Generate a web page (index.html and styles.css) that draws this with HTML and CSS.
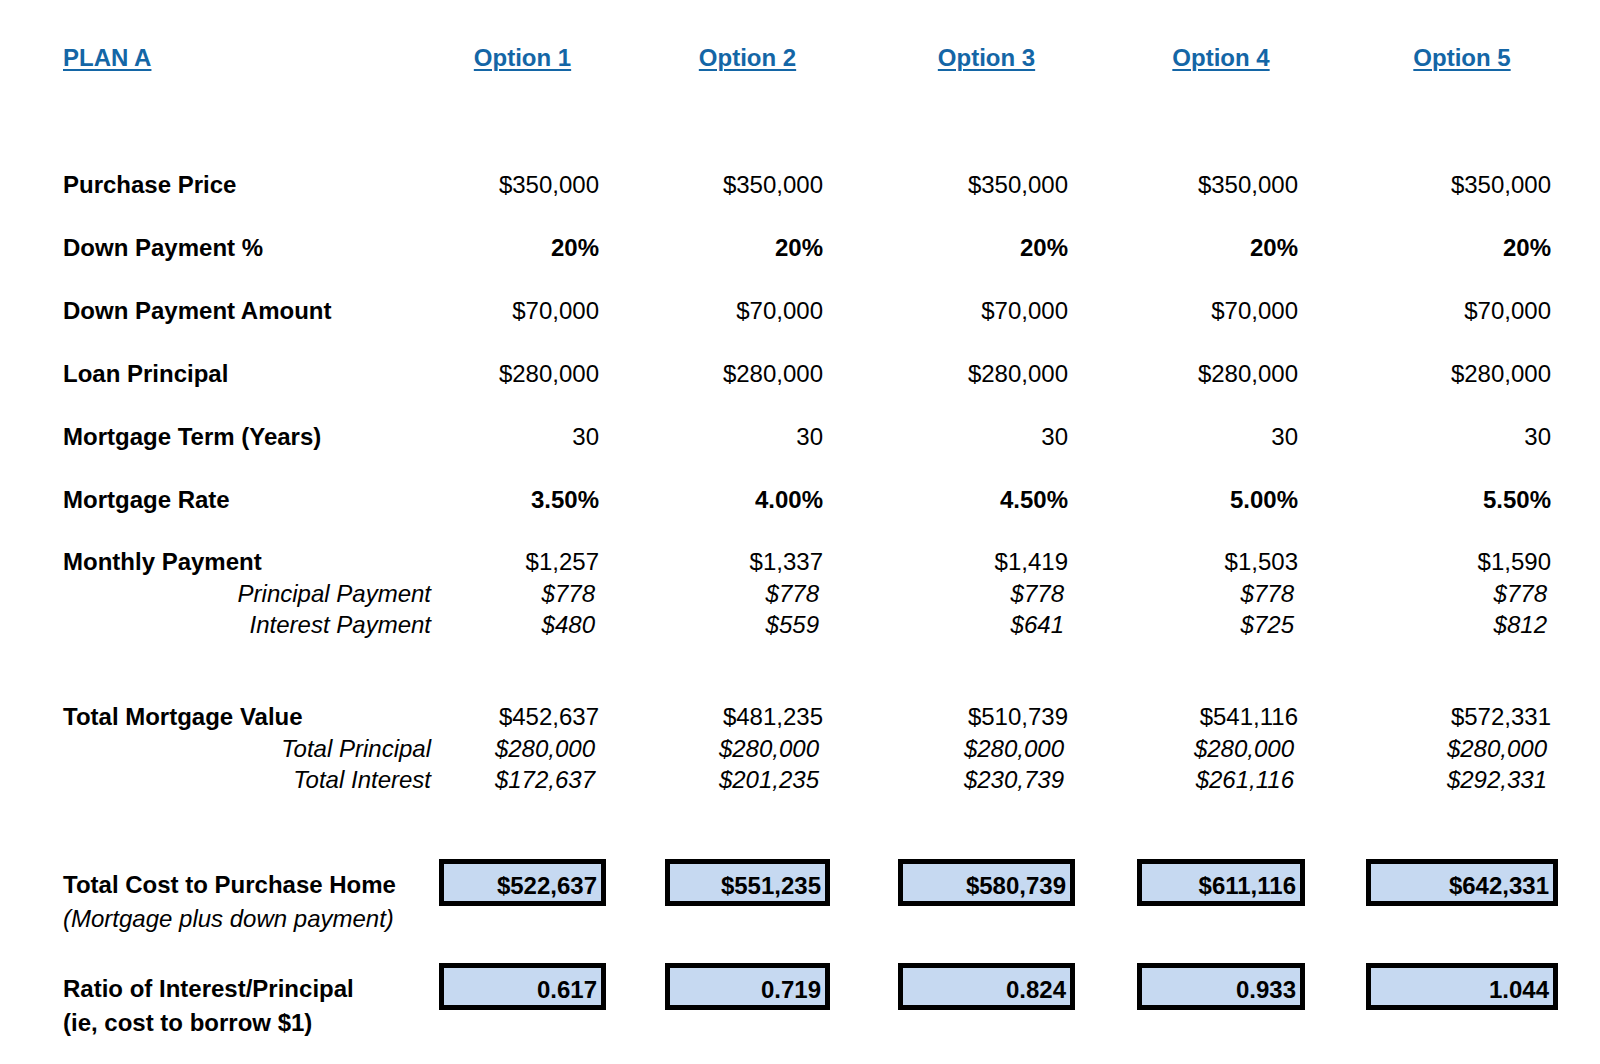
FILE: index.html
```html
<!DOCTYPE html>
<html lang="en">
<head>
<meta charset="utf-8">
<title>Plan A – Mortgage Options</title>
<link rel="stylesheet" href="styles.css">
</head>
<body>
<div class="sheet">
  <div class="row hdr">
    <div class="lab"><span class="link">PLAN A</span></div>
    <div class="cell"><span class="link">Option 1</span></div>
    <div class="cell"><span class="link">Option 2</span></div>
    <div class="cell"><span class="link">Option 3</span></div>
    <div class="cell"><span class="link">Option 4</span></div>
    <div class="cell"><span class="link">Option 5</span></div>
  </div>

  <div class="block main">
    <div class="row tall">
      <div class="lab b">Purchase Price</div>
      <div class="cell">$350,000</div><div class="cell">$350,000</div><div class="cell">$350,000</div><div class="cell">$350,000</div><div class="cell">$350,000</div>
    </div>
    <div class="row tall">
      <div class="lab b">Down Payment %</div>
      <div class="cell b">20%</div><div class="cell b">20%</div><div class="cell b">20%</div><div class="cell b">20%</div><div class="cell b">20%</div>
    </div>
    <div class="row tall">
      <div class="lab b">Down Payment Amount</div>
      <div class="cell">$70,000</div><div class="cell">$70,000</div><div class="cell">$70,000</div><div class="cell">$70,000</div><div class="cell">$70,000</div>
    </div>
    <div class="row tall">
      <div class="lab b">Loan Principal</div>
      <div class="cell">$280,000</div><div class="cell">$280,000</div><div class="cell">$280,000</div><div class="cell">$280,000</div><div class="cell">$280,000</div>
    </div>
    <div class="row tall">
      <div class="lab b">Mortgage Term (Years)</div>
      <div class="cell">30</div><div class="cell">30</div><div class="cell">30</div><div class="cell">30</div><div class="cell">30</div>
    </div>
    <div class="row tall">
      <div class="lab b">Mortgage Rate</div>
      <div class="cell b">3.50%</div><div class="cell b">4.00%</div><div class="cell b">4.50%</div><div class="cell b">5.00%</div><div class="cell b">5.50%</div>
    </div>
  </div>

  <div class="block monthly">
    <div class="row line">
      <div class="lab b">Monthly Payment</div>
      <div class="cell">$1,257</div><div class="cell">$1,337</div><div class="cell">$1,419</div><div class="cell">$1,503</div><div class="cell">$1,590</div>
    </div>
    <div class="row line sub">
      <div class="lab">Principal Payment</div>
      <div class="cell">$778</div><div class="cell">$778</div><div class="cell">$778</div><div class="cell">$778</div><div class="cell">$778</div>
    </div>
    <div class="row line sub">
      <div class="lab">Interest Payment</div>
      <div class="cell">$480</div><div class="cell">$559</div><div class="cell">$641</div><div class="cell">$725</div><div class="cell">$812</div>
    </div>
  </div>

  <div class="block totals">
    <div class="row line">
      <div class="lab b">Total Mortgage Value</div>
      <div class="cell">$452,637</div><div class="cell">$481,235</div><div class="cell">$510,739</div><div class="cell">$541,116</div><div class="cell">$572,331</div>
    </div>
    <div class="row line sub">
      <div class="lab">Total Principal</div>
      <div class="cell">$280,000</div><div class="cell">$280,000</div><div class="cell">$280,000</div><div class="cell">$280,000</div><div class="cell">$280,000</div>
    </div>
    <div class="row line sub">
      <div class="lab">Total Interest</div>
      <div class="cell">$172,637</div><div class="cell">$201,235</div><div class="cell">$230,739</div><div class="cell">$261,116</div><div class="cell">$292,331</div>
    </div>
  </div>

  <div class="row boxed cost">
    <div class="lab2">
      <div class="b">Total Cost to Purchase Home</div>
      <div class="i">(Mortgage plus down payment)</div>
    </div>
    <div class="box">$522,637</div>
    <div class="box">$551,235</div>
    <div class="box">$580,739</div>
    <div class="box">$611,116</div>
    <div class="box">$642,331</div>
  </div>

  <div class="row boxed ratio">
    <div class="lab2">
      <div class="b">Ratio of Interest/Principal</div>
      <div class="b">(ie, cost to borrow $1)</div>
    </div>
    <div class="box">0.617</div>
    <div class="box">0.719</div>
    <div class="box">0.824</div>
    <div class="box">0.933</div>
    <div class="box">1.044</div>
  </div>
</div>
</body>
</html>
```

FILE: styles.css
```css
html, body {
  margin: 0;
  padding: 0;
  background: #ffffff;
}

body {
  font-family: "Liberation Sans", Arial, Helvetica, sans-serif;
  font-size: 24px;
  color: #000000;
}

.sheet {
  padding: 42px 0 0 63px;
  width: 1495px;
}

.row {
  display: grid;
  grid-template-columns: 376px 167px 224px 245px 230px 253px;
  align-items: start;
}

.row > :nth-child(2) { --w: 167px; }
.row > :nth-child(3) { --w: 165px; }
.row > :nth-child(4) { --w: 177px; }
.row > :nth-child(5) { --w: 168px; }
.row > :nth-child(6) { --w: 192px; }

.b { font-weight: bold; }
.i { font-style: italic; }

.lab {
  white-space: nowrap;
}

.cell {
  text-align: right;
  padding-right: 7px;
  white-space: nowrap;
}

/* header */
.hdr {
  line-height: 31.5px;
  height: 31.5px;
}
.hdr .cell {
  justify-self: end;
  width: var(--w);
  padding-right: 0;
  text-align: center;
}
.link {
  color: #1466a6;
  font-weight: bold;
  text-decoration: underline;
  text-decoration-thickness: 2px;
  text-underline-offset: 3px;
}

/* main rows */
.main {
  margin-top: 79px;
}
.tall {
  line-height: 63px;
  height: 63px;
}

.line {
  line-height: 31.5px;
  height: 31.5px;
}

.monthly {
  margin-top: 15.5px;
}
.totals {
  margin-top: 60.5px;
}

.sub {
  font-style: italic;
}
.sub .lab {
  text-align: right;
  padding-right: 8px;
}
.sub .cell {
  padding-right: 11px;
}

/* boxed summary rows */
.boxed .lab2 {
  padding-top: 8.5px;
  line-height: 34.5px;
  white-space: nowrap;
}
.cost {
  margin-top: 63.5px;
}
.ratio {
  margin-top: 26.5px;
}

.box {
  justify-self: end;
  width: var(--w);
  box-sizing: border-box;
  height: 47px;
  border: 5px solid #000000;
  background: #c6d9f1;
  padding: 6px 4px 0 0;
  line-height: 31px;
  text-align: right;
  font-weight: bold;
  white-space: nowrap;
}
```
